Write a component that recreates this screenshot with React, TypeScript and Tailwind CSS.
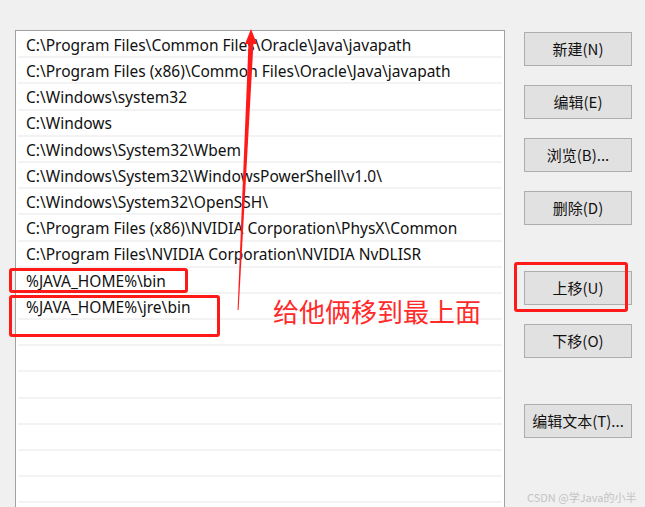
import React from "react";

const rows = [
  "C:\\Program Files\\Common Files\\Oracle\\Java\\javapath",
  "C:\\Program Files (x86)\\Common Files\\Oracle\\Java\\javapath",
  "C:\\Windows\\system32",
  "C:\\Windows",
  "C:\\Windows\\System32\\Wbem",
  "C:\\Windows\\System32\\WindowsPowerShell\\v1.0\\",
  "C:\\Windows\\System32\\OpenSSH\\",
  "C:\\Program Files (x86)\\NVIDIA Corporation\\PhysX\\Common",
  "C:\\Program Files\\NVIDIA Corporation\\NVIDIA NvDLISR",
  "%JAVA_HOME%\\bin",
  "%JAVA_HOME%\\jre\\bin",
  "", "", "", "", "", "", "", "",
];

const font = { fontFamily: '"Noto Sans", "Noto Sans CJK SC", sans-serif' };

function Btn({ label, className = "" }: { label: string; className?: string }) {
  return (
    <div
      className={"h-[34px] w-[108px] bg-[#e1e1e1] border border-[#adadad] flex items-center justify-center text-[15px] text-[#111] " + className}
      style={{ fontFamily: '"Noto Sans CJK SC", "Noto Sans", sans-serif' }}
    >
      {label}
    </div>
  );
}

export default function App() {
  return (
    <div className="relative w-[645px] h-[507px] overflow-hidden bg-[#f0f0f0]" style={font}>
      <div className="flex pt-[30px] pl-[15px]">
        <div className="w-[490px] h-[500px] bg-white border border-[#a0a0a0] border-b-0 pt-[1px] overflow-hidden">
          {rows.map((r, i) => (
            <div
              key={i}
              className="h-[26.2px] border-b-2 border-[#f3f3f3] mx-[2px] pl-[8px] pt-[3px] flex items-center text-[15.5px] text-[#111] whitespace-nowrap leading-none"
            >
              {r}
            </div>
          ))}
        </div>
        <div className="ml-[19px] pt-[2px] flex flex-col">
          <Btn label="新建(N)" />
          <Btn label="编辑(E)" className="mt-[19px]" />
          <Btn label="浏览(B)..." className="mt-[19px]" />
          <Btn label="删除(D)" className="mt-[19px]" />
          <Btn label="上移(U)" className="mt-[46px]" />
          <Btn label="下移(O)" className="mt-[19px]" />
          <Btn label="编辑文本(T)..." className="mt-[46px]" />
        </div>
      </div>

      {/* annotations */}
      <div className="absolute left-[9px] top-[268px] w-[179px] h-[25px] border-[3px] border-[#ff1a1a] rounded-[3px]" />
      <div className="absolute left-[9px] top-[295px] w-[211px] h-[42px] border-[3px] border-[#ff1a1a] rounded-[3px]" />
      <div className="absolute left-[514px] top-[262px] w-[114px] h-[50px] border-[3px] border-[#ff1a1a] rounded-[3px]" />
      <div
        className="absolute left-[273px] top-[298px] text-[26px] leading-none text-[#ff2a2a] whitespace-nowrap"
        style={{ fontFamily: '"Noto Sans CJK SC", sans-serif' }}
      >
        给他俩移到最上面
      </div>
      <svg className="absolute left-0 top-0" width="645" height="507" viewBox="0 0 645 507">
        <polygon points="248.5,43 253.5,43 238.6,310 237.6,310" fill="#ff1a1a" />
        <polygon points="251,29 257,44 245,44" fill="#ff1a1a" />
      </svg>
      <div
        className="absolute left-[527px] top-[489px] text-[11px] text-[#c4c4c4] whitespace-nowrap"
        style={{ fontFamily: '"Noto Sans CJK SC", sans-serif' }}
      >
        CSDN @学Java的小半
      </div>
    </div>
  );
}
